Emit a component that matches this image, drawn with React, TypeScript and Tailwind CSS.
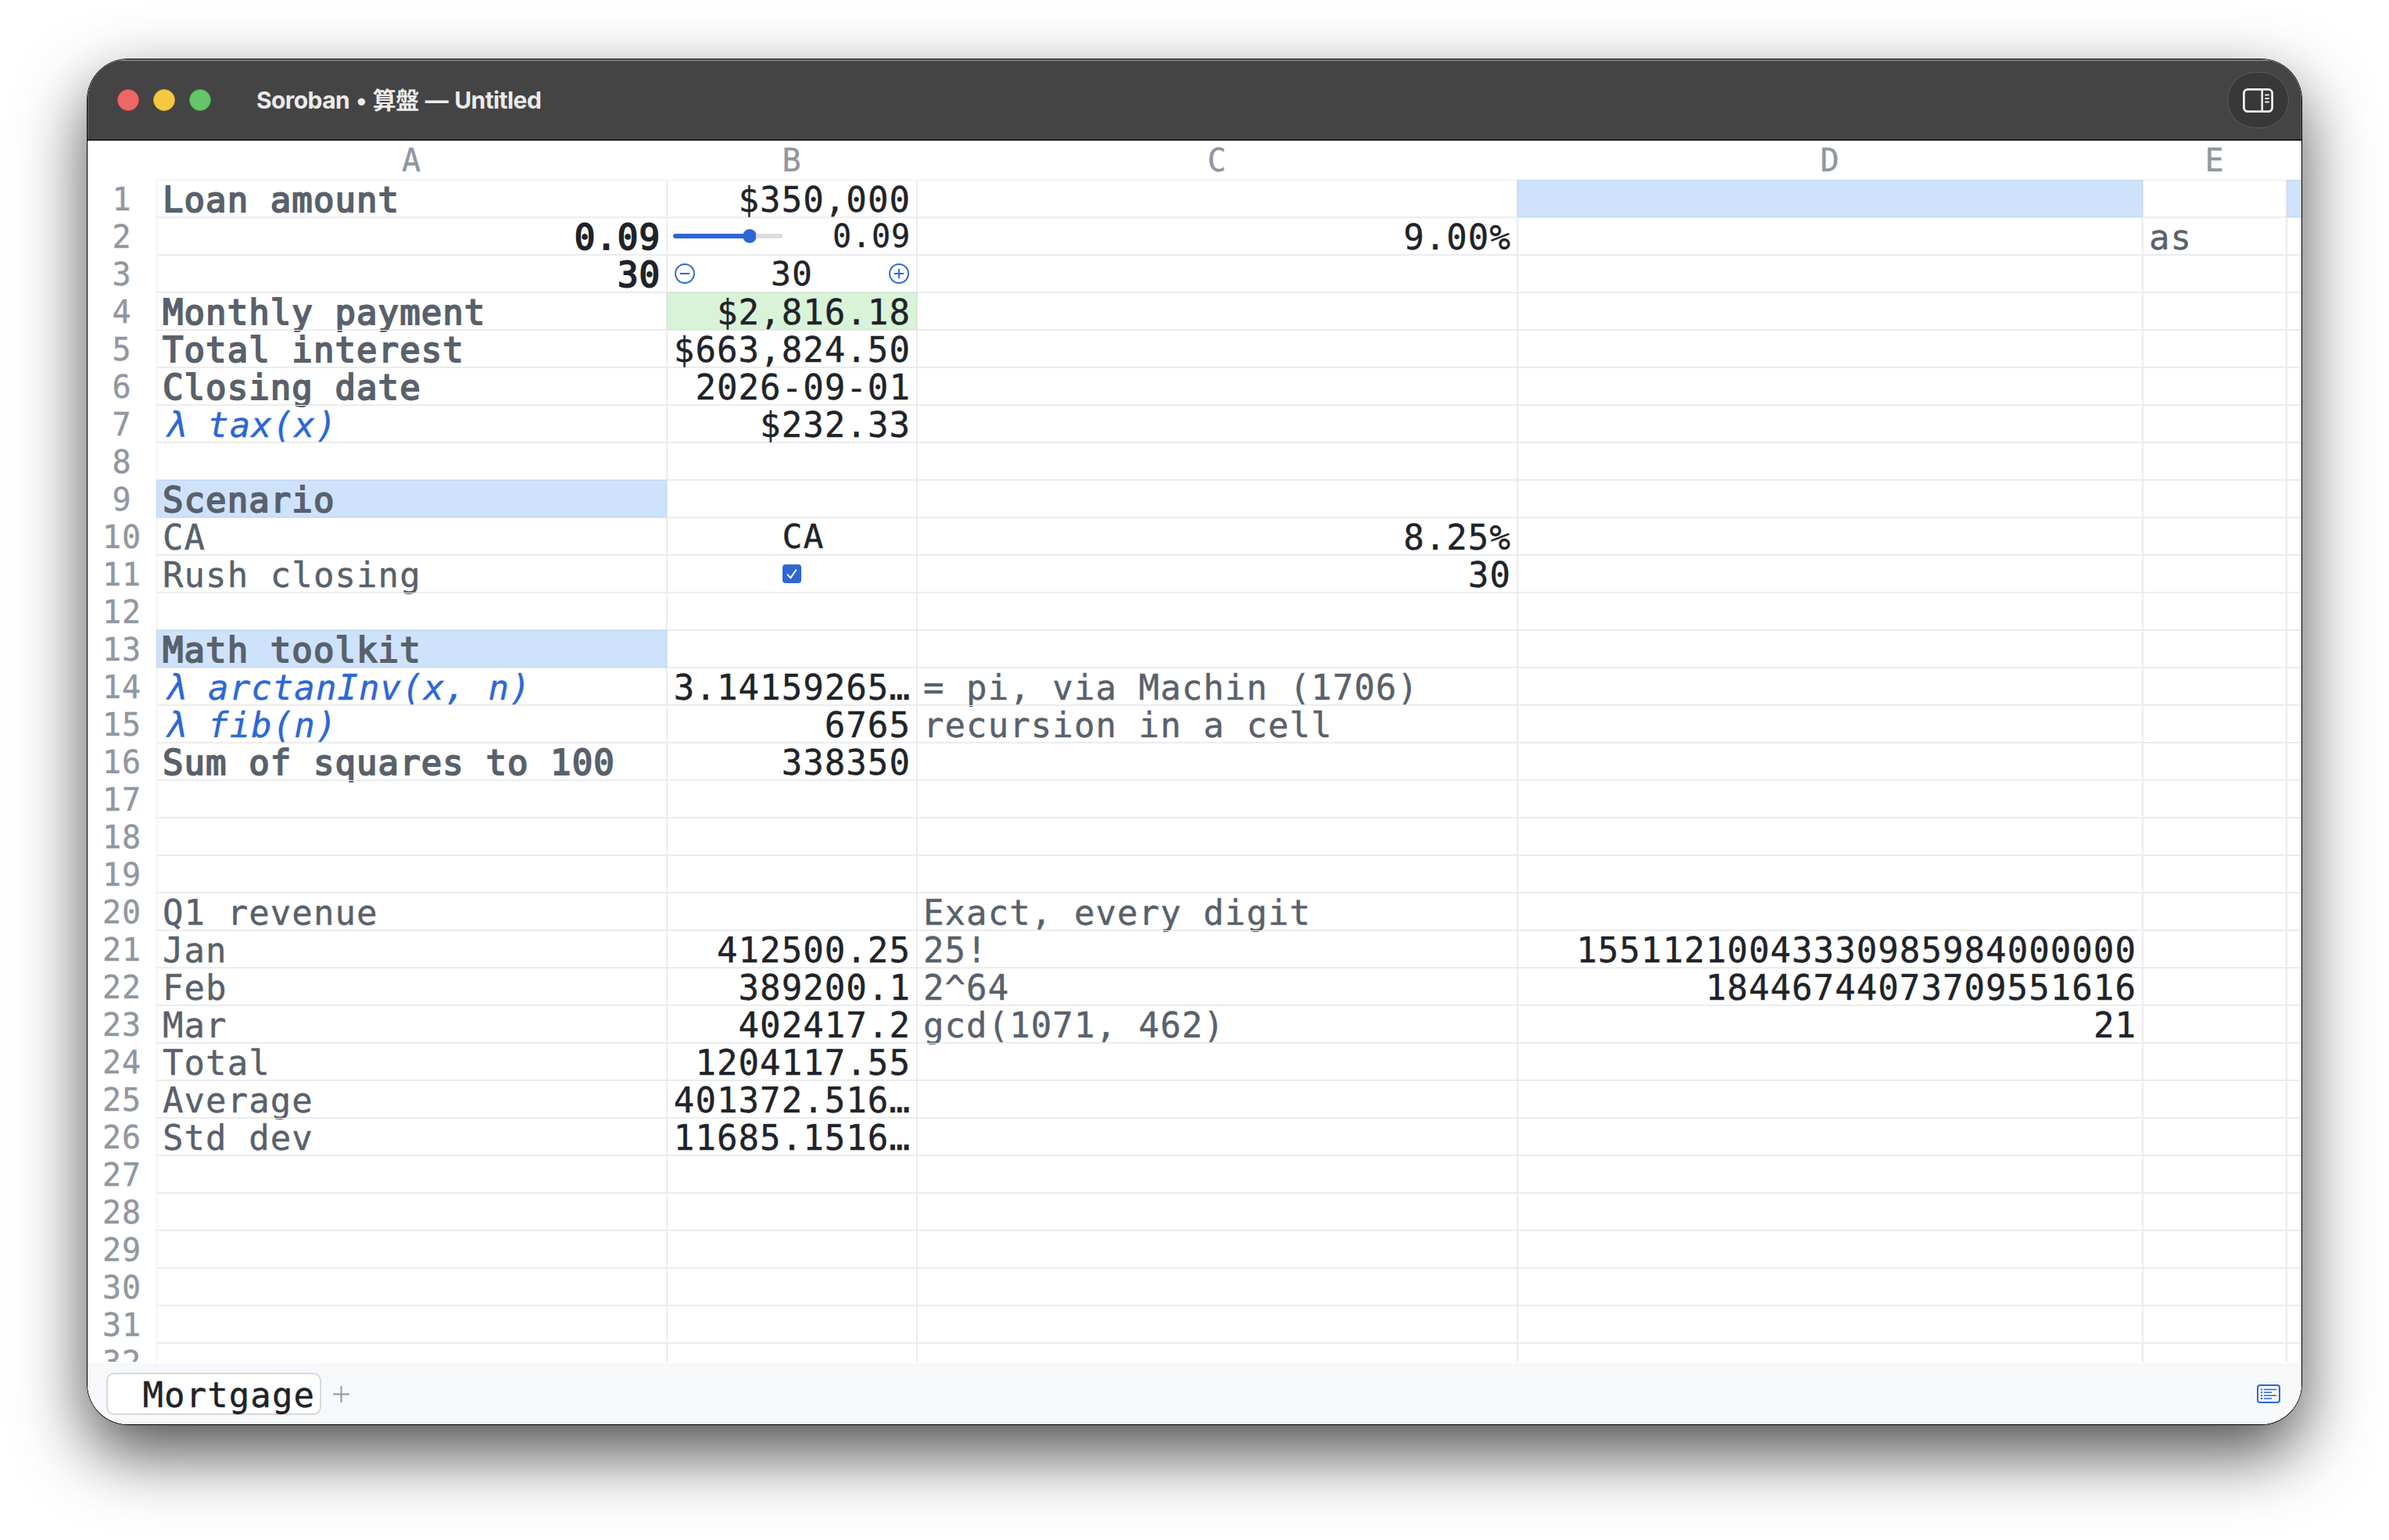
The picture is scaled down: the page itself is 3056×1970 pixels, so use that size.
import React from 'react';

interface Cell {
  text?: string;
  className?: string;
  fill?: 'blue' | 'green';
  control?: 'slider' | 'stepper' | 'menu' | 'checkbox';
}

type Row = Record<string, Cell>;

const columns = [
  { id: 'A', width: 'w-[653px]' },
  { id: 'B', width: 'w-[320px]' },
  { id: 'C', width: 'w-[768px]' },
  { id: 'D', width: 'w-[800px]' },
  { id: 'E', width: 'w-[184px]' },
  { id: 'F', width: 'w-[184px]' },
];

const fills = {
  blue: 'bg-[#cfe2fc] border-[#c1d6f3]',
  green: 'bg-[#d9f3d9] border-[#cbe6cd]',
};

const label = (text: string): Cell => ({
  text,
  className: 'text-[#59616b] [-webkit-text-stroke:0.4px_#59616b]',
});
const heading = (text: string, fill?: 'blue'): Cell => ({
  text,
  fill,
  className: 'text-[#59616b] [-webkit-text-stroke:1.9px_#59616b]',
});
const lambda = (text: string): Cell => ({
  text,
  className: 'italic text-[#2d67d6] pl-2.5 [-webkit-text-stroke:0.4px_#2d67d6]',
});
const value = (text: string, fill?: 'green'): Cell => ({
  text,
  fill,
  className: 'justify-end text-[#202328] [-webkit-text-stroke:0.4px_#202328]',
});
const strongValue = (text: string): Cell => ({
  text,
  className: 'justify-end text-[#202328] [-webkit-text-stroke:1.9px_#202328]',
});

const rows: Record<number, Row> = {
  1: { A: heading('Loan amount'), B: value('$350,000'), D: { fill: 'blue' }, F: { fill: 'blue' } },
  2: { A: strongValue('0.09'), B: { text: '0.09', control: 'slider' }, C: value('9.00%'), E: label('as') },
  3: { A: strongValue('30'), B: { text: '30', control: 'stepper' } },
  4: { A: heading('Monthly payment'), B: value('$2,816.18', 'green') },
  5: { A: heading('Total interest'), B: value('$663,824.50') },
  6: { A: heading('Closing date'), B: value('2026-09-01') },
  7: { A: lambda('λ tax(x)'), B: value('$232.33') },
  9: { A: heading('Scenario', 'blue') },
  10: { A: label('CA'), B: { text: 'CA', control: 'menu' }, C: value('8.25%') },
  11: { A: label('Rush closing'), B: { control: 'checkbox' }, C: value('30') },
  13: { A: heading('Math toolkit', 'blue') },
  14: { A: lambda('λ arctanInv(x, n)'), B: value('3.14159265…'), C: label('= pi, via Machin (1706)') },
  15: { A: lambda('λ fib(n)'), B: value('6765'), C: label('recursion in a cell') },
  16: { A: heading('Sum of squares to 100'), B: value('338350') },
  20: { A: label('Q1 revenue'), C: label('Exact, every digit') },
  21: { A: label('Jan'), B: value('412500.25'), C: label('25!'), D: value('15511210043330985984000000') },
  22: { A: label('Feb'), B: value('389200.1'), C: label('2^64'), D: value('18446744073709551616') },
  23: { A: label('Mar'), B: value('402417.2'), C: label('gcd(1071, 462)'), D: value('21') },
  24: { A: label('Total'), B: value('1204117.55') },
  25: { A: label('Average'), B: value('401372.516…') },
  26: { A: label('Std dev'), B: value('11685.1516…') },
};

const Slider: React.FC<{ text?: string }> = ({ text }) => (
  <div className="flex w-full items-center justify-between">
    <div className="flex h-[18px] w-[140px] items-center">
      <div className="h-1.5 w-[90px] rounded-l-full bg-[#2d67d6]" />
      <div className="-ml-px h-[18px] w-[18px] rounded-full bg-[#2d67d6]" />
      <div className="-ml-px h-1.5 flex-1 rounded-r-full bg-[#dcdde1]" />
    </div>
    <span className="text-[40px] leading-[50px] tracking-[0.9px]">{text}</span>
  </div>
);

const RoundButton: React.FC<{ plus?: boolean }> = ({ plus }) => (
  <svg className="size-[26px]" viewBox="0 0 26 26" fill="none" stroke="#2d67d6" strokeWidth="1.9">
    <circle cx="13" cy="13" r="12" />
    <path d={plus ? 'M7.5 13h11M13 7.5v11' : 'M7.5 13h11'} strokeLinecap="round" />
  </svg>
);

const CellView: React.FC<{ cell?: Cell; width: string }> = ({ cell, width }) => (
  <div
    className={`flex h-12 shrink-0 items-center border px-[7px] whitespace-pre ${width} ${
      cell?.fill ? fills[cell.fill] : 'border-[#ececee]'
    } ${cell?.className ?? 'text-[#202328] [-webkit-text-stroke:0.4px_#202328]'}`}
  >
    {cell?.control === 'slider' && <Slider text={cell.text} />}
    {cell?.control === 'stepper' && (
      <div className="flex w-full items-center justify-between px-0.5">
        <RoundButton />
        <span className="text-[43px] leading-[50px] tracking-[1px]">{cell.text}</span>
        <RoundButton plus />
      </div>
    )}
    {cell?.control === 'menu' && (
      <span className="w-full pl-[29px] text-center text-[43px] leading-[50px]">{cell.text}</span>
    )}
    {cell?.control === 'checkbox' && (
      <div className="mx-auto flex size-6 items-center justify-center rounded bg-[#2d67d6]">
        <svg className="size-6" viewBox="0 0 24 24" fill="none" stroke="#fff" strokeWidth="2">
          <path d="M6.5 13.2l3.8 4.2 7-10.4" strokeLinecap="round" strokeLinejoin="round" />
        </svg>
      </div>
    )}
    {!cell?.control && <span className="h-[46px] leading-[50px]">{cell?.text}</span>}
  </div>
);

const TitleBar = () => (
  <div className="flex h-[104px] shrink-0 items-center border-b-2 border-[#222] bg-[#444] pt-0.5 pr-4 pl-[38px] shadow-[inset_0_2px_0_#7c7e7c,inset_1px_0_0_#686868,inset_-1px_0_0_#686868]">
    <div className="flex gap-[18px]">
      <div className="size-7 rounded-full border border-[#d9494a] bg-[#f06767]" />
      <div className="size-7 rounded-full border border-[#d9a92c] bg-[#f4c843]" />
      <div className="size-7 rounded-full border border-[#3fa845] bg-[#66c56a]" />
    </div>
    <div className="ml-[58px] font-['Inter','Noto_Sans_CJK_JP',sans-serif] text-[30px] font-bold tracking-[-0.6px] [word-spacing:1.6px] whitespace-pre text-[#ebebeb]">
      Soroban • 算盤 — Untitled
    </div>
    <button className="ml-auto flex h-[72px] w-[79px] items-center justify-center rounded-full border border-[#5c5c5c] bg-[#383838]">
      <svg className="h-[31px] w-[39px]" viewBox="0 0 39 31" fill="none" stroke="#ededed">
        <rect x="1.4" y="1.4" width="36.2" height="28.2" rx="5" strokeWidth="2.8" />
        <path d="M24.7 2v27" strokeWidth="2.6" />
        <path d="M29 8.5h4M29 13h4M29 17.5h4" strokeWidth="1.9" strokeLinecap="round" />
      </svg>
    </button>
  </div>
);

const Sheet = () => (
  <div className="h-[1562px] shrink-0 overflow-hidden bg-white">
    <div className="flex h-[50px] pl-[88px] text-[40px] leading-[50px] text-[#9097a1] [-webkit-text-stroke:0.4px_#9097a1]">
      {columns.slice(0, 5).map((col) => (
        <div key={col.id} className={`shrink-0 text-center ${col.width}`}>
          {col.id}
        </div>
      ))}
    </div>
    {Array.from({ length: 32 }, (_, i) => i + 1).map((n) => (
      <div key={n} className="flex h-12">
        <div className="w-[88px] shrink-0 text-center text-[40px] leading-[50px] tracking-[0.9px] text-[#9097a1] [-webkit-text-stroke:0.4px_#9097a1]">
          {n}
        </div>
        {columns.map((col) => (
          <CellView key={col.id} cell={rows[n]?.[col.id]} width={col.width} />
        ))}
      </div>
    ))}
  </div>
);

const TabBar = () => (
  <div className="mt-0.5 flex flex-1 items-center bg-[#f6f8fa] pr-[27px] pl-6">
    <div className="flex h-[54px] w-[275px] justify-end rounded-[10px] border-2 border-[#d5d9dd] bg-white pr-1.5 text-[#202328] [-webkit-text-stroke:0.4px_#202328]">
      <span className="leading-[54px]">Mortgage</span>
    </div>
    <svg className="ml-[15px] size-[21px]" viewBox="0 0 21 21" stroke="#9097a1" strokeWidth="2">
      <path d="M0.5 10.5h20M10.5 0.5v20" strokeLinecap="round" />
    </svg>
    <svg className="ml-auto h-6 w-[30px]" viewBox="0 0 30 24" fill="none" stroke="#2d67d6">
      <rect x="1" y="1" width="28" height="22" rx="3" strokeWidth="2" />
      <path d="M9 6.5h16M9 10.3h10M9 14.2h16M9 18h10" strokeWidth="1.5" />
      <path d="M5 6.5h2.2M5 10.3h2.2M5 14.2h2.2M5 18h2.2" strokeWidth="2" />
    </svg>
  </div>
);

const App = () => {
  return (
    <div className="h-[1970px] w-[3056px] overflow-hidden bg-white pt-[76px] pl-28">
      <div className="h-[1746px] w-[2832px] rounded-[52px] shadow-[0_0_0_1px_#000,0_36px_88px_rgba(0,0,0,0.7)]">
        <div className="flex h-full flex-col overflow-hidden rounded-[52px] bg-white font-['DejaVu_Sans_Mono',monospace] text-[44px] tracking-[1.07px]">
          <TitleBar />
          <Sheet />
          <TabBar />
        </div>
      </div>
    </div>
  );
};

export default App;
